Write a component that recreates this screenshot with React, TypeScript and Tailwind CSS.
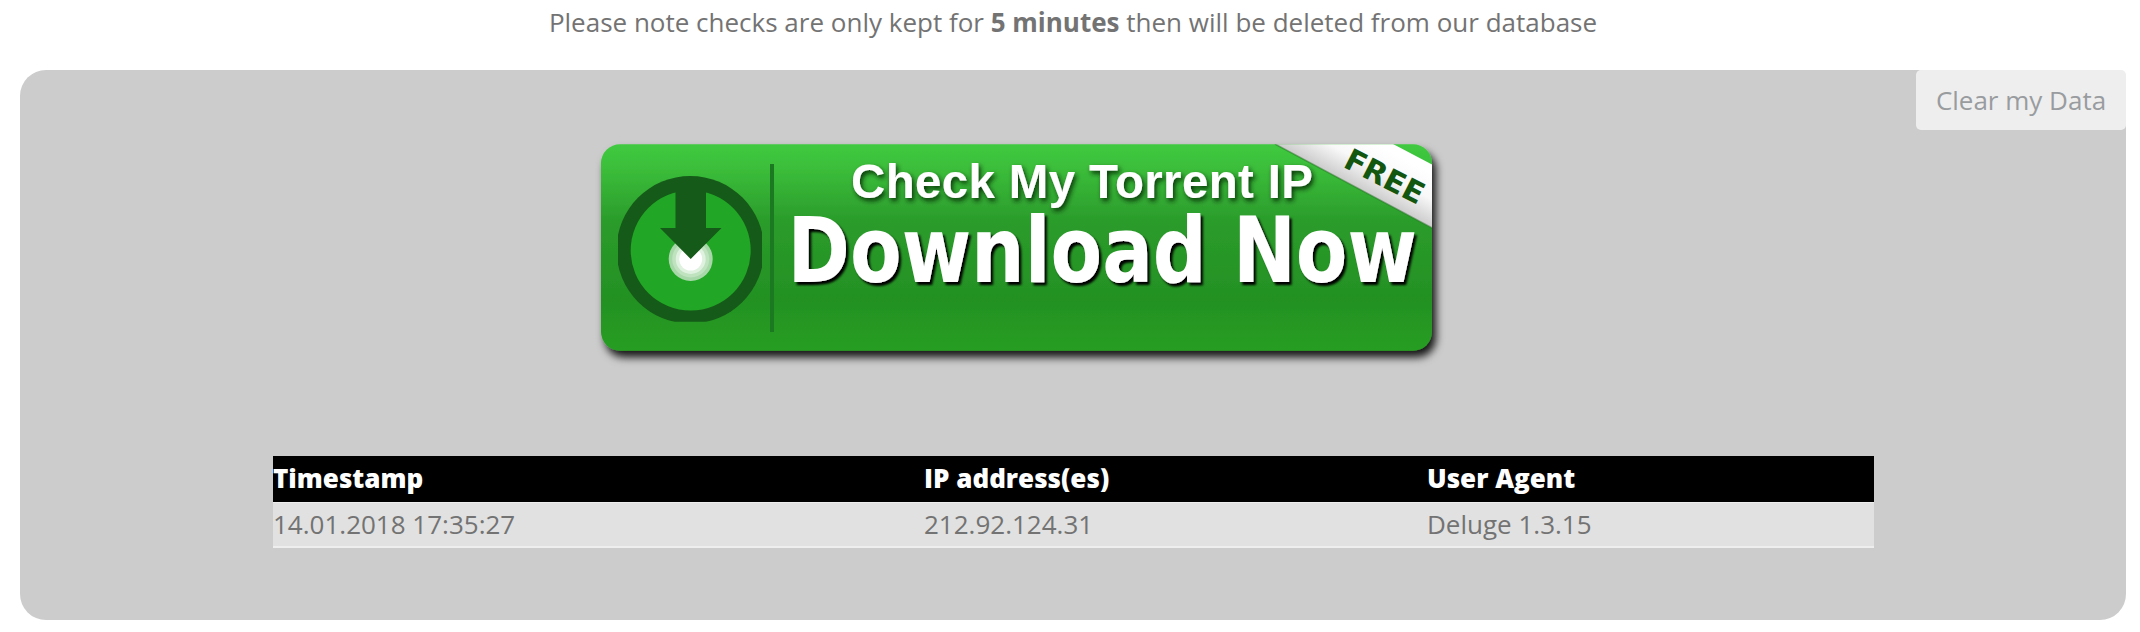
const rows = [{ time: '14.01.2018 17:35:27', ip: '212.92.124.31', agent: 'Deluge 1.3.15' }];

function DownloadBanner() {
  return (
    <svg width="870" height="240" viewBox="590 130 870 240" role="img" aria-label="Download">
      <defs>
        <linearGradient id="green" x1="0" y1="0" x2="0" y2="1">
          <stop offset="0" stopColor="#40ca40" />
          <stop offset="0.1" stopColor="#3cc03b" />
          <stop offset="0.37" stopColor="#2b9c2b" />
          <stop offset="0.75" stopColor="#239123" />
          <stop offset="1" stopColor="#289e24" />
        </linearGradient>
        <linearGradient id="ribbon" gradientUnits="userSpaceOnUse" x1="1373" y1="142" x2="1346" y2="192">
          <stop offset="0" stopColor="#fff" />
          <stop offset="0.4" stopColor="#f8f8f8" />
          <stop offset="1" stopColor="#bcbcbc" />
        </linearGradient>
        <clipPath id="card"><rect x="601" y="144.3" width="831" height="206.5" rx="19" /></clipPath>
        <clipPath id="disc"><rect x="618" y="176" width="144" height="145.8" /></clipPath>
        <filter id="cardShadow" x="-5%" y="-10%" width="110%" height="125%">
          <feDropShadow dx="4" dy="6.500" stdDeviation="4" floodColor="#000" floodOpacity="0.9" />
        </filter>
        <filter id="softShadow" x="-5%" y="-20%" width="110%" height="150%">
          <feDropShadow dx="2" dy="3" stdDeviation="2.5" floodColor="#002000" floodOpacity="0.85" />
        </filter>
        <filter id="hardShadow" x="-5%" y="-20%" width="110%" height="150%">
          <feDropShadow dx="2.5" dy="3" stdDeviation="1" floodColor="#000" floodOpacity="1" />
        </filter>
      </defs>
      <rect x="601" y="144.3" width="831" height="206.5" rx="19" fill="url(#green)" filter="url(#cardShadow)" />
      <g clipPath="url(#card)">
        <path d="M1275 144H1393L1433 165V228.500Z" fill="url(#ribbon)" />
        <path d="M1275 144L1433 228.500" stroke="#1b6e1b" strokeOpacity="0.5" strokeWidth="1.500" />
      </g>
      <g clipPath="url(#disc)">
        <circle cx="690.3" cy="249.800" r="73.800" fill="#155a18" />
        <circle cx="690.7" cy="250.500" r="60" fill="#21a625" />
      </g>
      <circle cx="690.7" cy="259" r="22" fill="#a8d8a9" />
      <circle cx="690.7" cy="259" r="18.500" fill="#bfe2bf" />
      <circle cx="690.7" cy="259" r="15" fill="#dff1df" />
      <circle cx="690.7" cy="259" r="11.500" fill="#fff" />
      <path d="M675.500 184H706V228H721.500L690.700 259L660 228H675.500Z" fill="#155a18" />
      <rect x="770" y="164" width="4" height="168" fill="#1b7a21" />
      <g className="font-bold" fill="#fff">
        <text x="851" y="197.500" fontSize="47.500" textLength="462" className="font-['Liberation_Sans',sans-serif]" filter="url(#softShadow)">
          Check My Torrent IP
        </text>
        <text x="787.5" y="282.300" fontSize="90" textLength="629.500" lengthAdjust="spacingAndGlyphs" className="font-['DejaVu_Sans_Condensed','DejaVu_Sans',sans-serif]" filter="url(#hardShadow)">
          Download Now
        </text>
      </g>
      <text transform="translate(1342 166.500) rotate(27)" fontSize="30" textLength="85" lengthAdjust="spacingAndGlyphs" className="font-['DejaVu_Sans',sans-serif] font-bold" fill="#12560f">
        FREE
      </text>
    </svg>
  );
}

export default function App() {
  return (
    <main className="h-[632px] w-[2140px] overflow-hidden bg-white pr-[14px] pl-5 font-['Open_Sans',sans-serif] text-[26px] leading-[44px] text-[#737373]">
      <p className="h-[70px] text-center">
        Please note checks are only kept for <strong className="font-bold">5 minutes</strong> then will be deleted from our database
      </p>
      <section className="flex h-[550px] flex-col rounded-[26px] bg-[#ccc]">
        <div className="flex h-[60px] justify-end">
          <button className="h-[60px] w-[210px] rounded-[5px] bg-[#eee] text-[#999c9f]">Clear my Data</button>
        </div>
        <div className="ml-[570px] h-[326px]">
          <DownloadBanner />
        </div>
        <table className="ml-[253px] w-[1601px] table-fixed border-collapse text-left">
          <colgroup>
            <col className="w-[651px]" />
            <col className="w-[503px]" />
            <col />
          </colgroup>
          <thead>
            <tr className="h-[46px] bg-black text-white">
              {['Timestamp', 'IP address(es)', 'User Agent'].map((h) => (
                <th key={h} className="p-0 pb-0.5 font-extrabold">{h}</th>
              ))}
            </tr>
          </thead>
          <tbody>
            {rows.map((r) => (
              <tr key={r.time} className="h-[46px] bg-[#e1e1e1] shadow-[inset_0_-2px_0_#eee,inset_0_1px_0_#eee]">
                <td className="p-0 pb-0.5">{r.time}</td>
                <td className="p-0 pb-0.5">{r.ip}</td>
                <td className="p-0 pb-0.5">{r.agent}</td>
              </tr>
            ))}
          </tbody>
        </table>
      </section>
    </main>
  );
}
